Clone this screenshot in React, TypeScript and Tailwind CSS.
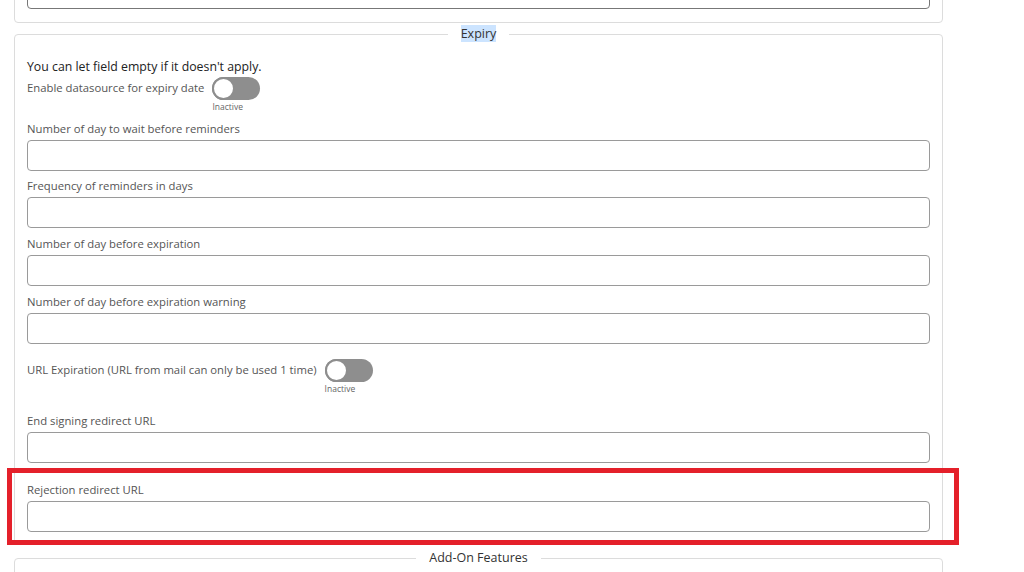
import { ReactNode } from 'react';

const font = { fontFamily: '"Open Sans", "Noto Sans", sans-serif' };

function Toggle({ label }: { label: string }) {
  return (
    <div className="flex items-start gap-[8px]">
      <span className="text-[11.3px] leading-[22px] text-[#555]">{label}</span>
      <div className="flex flex-col items-start">
        <button
          type="button"
          className="w-[48px] h-[23px] rounded-full bg-[#8e8e8e] flex items-center p-0"
        >
          <span className="w-[23px] h-[23px] rounded-full bg-white border-2 border-[#8e8e8e]" />
        </button>
        <span className="text-[8.5px] leading-[12px] mt-[1px] text-[#666]">Inactive</span>
      </div>
    </div>
  );
}

function Field({ label, className = '' }: { label: string; className?: string }) {
  return (
    <div className={className}>
      <label className="block text-[11.3px] leading-[16px] text-[#555]">{label}</label>
      <input
        type="text"
        className="block w-full h-[31px] mt-[3px] rounded-[4px] border border-[#9a9a9a] bg-white px-2 text-[12px] outline-none"
      />
    </div>
  );
}

function Section({ title, className = '', children }: { title: string; className?: string; children?: ReactNode }) {
  return (
    <fieldset className={`border border-[#dcdcdc] rounded-[4px] px-[12px] ${className}`}>
      <legend className="mx-auto px-[13px] text-[12.5px] leading-[20px] text-[#333]">
        {title === 'Expiry' ? <span className="bg-[#cce4ff]">{title}</span> : title}
      </legend>
      {children}
    </fieldset>
  );
}

export default function App() {
  return (
    <div className="relative w-[1024px] h-[572px] overflow-hidden bg-white" style={font}>
      <div className="w-[929px] ml-[14px]">
        {/* previous section, scrolled mostly out of view */}
        <div className="h-[60px] -mt-[37px] border border-[#dcdcdc] rounded-[4px] px-[12px] pt-[14px]">
          <input
            type="text"
            className="block w-full h-[31px] rounded-[4px] border border-[#777] bg-white outline-none"
          />
        </div>

        <Section title="Expiry" className="mt-[1px] pb-[11px] h-[521px]">
          <p className="mt-[14px] text-[12.3px] leading-[18px] text-[#222]">You can let field empty if it doesn't apply.</p>
          <div className="mt-[1px]">
            <Toggle label="Enable datasource for expiry date" />
          </div>
          <Field label="Number of day to wait before reminders" className="mt-[8px]" />
          <Field label="Frequency of reminders in days" className="mt-[7px]" />
          <Field label="Number of day before expiration" className="mt-[8px]" />
          <Field label="Number of day before expiration warning" className="mt-[8px]" />
          <div className="mt-[15px]">
            <Toggle label="URL Expiration (URL from mail can only be used 1 time)" />
          </div>
          <Field label="End signing redirect URL" className="mt-[18px]" />
          <Field label="Rejection redirect URL" className="mt-[19px]" />
        </Section>

        <Section title="Add-On Features" className="mt-[3px] h-[60px]" />
      </div>

      {/* red highlight around the rejection URL field */}
      <div className="absolute left-[7px] top-[468px] w-[952px] h-[77px] border-[5px] border-[#e4202a]" />
    </div>
  );
}
